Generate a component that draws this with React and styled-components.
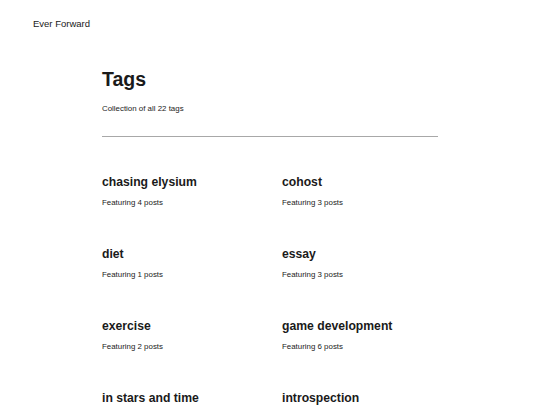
import React from "react";
import styled, { createGlobalStyle } from "styled-components";

const Global = createGlobalStyle`
  html, body { margin: 0; padding: 0; background: #ffffff; }
  body { font-family: "Liberation Sans", Arial, sans-serif; color: #1f1f1f; }
`;

const Header = styled.header`
  padding: 18px 33px 0;
`;

const SiteName = styled.a`
  display: block;
  font-size: 9.5px;
  line-height: 12px;
  color: #1a1a1a;
  text-decoration: none;
`;

const Main = styled.main`
  width: 336px;
  margin: 0 auto;
`;

const Title = styled.h1`
  margin: 37px 0 0;
  font-size: 19.5px;
  line-height: 24px;
  font-weight: 700;
  color: #1a1a1a;
`;

const Subtitle = styled.p`
  margin: 13px 0 0;
  font-size: 7.9px;
  line-height: 10px;
  color: #222;
`;

const Rule = styled.hr`
  margin: 22px 0 0;
  border: 0;
  border-top: 1.5px solid #a8a8a8;
  height: 0;
`;

const Grid = styled.div`
  display: grid;
  grid-template-columns: 180px 156px;
  row-gap: 39px;
  padding-top: 38px;
`;

const Tag = styled.div`
  display: flex;
  flex-direction: column;
  gap: 8px;
`;

const TagName = styled.a`
  font-size: 12.2px;
  line-height: 15px;
  font-weight: 700;
  color: #1a1a1a;
  text-decoration: none;
`;

const TagCount = styled.span`
  font-size: 7.9px;
  line-height: 10px;
  color: #222;
`;

const tags = [
  ["chasing elysium", 4],
  ["cohost", 3],
  ["diet", 1],
  ["essay", 3],
  ["exercise", 2],
  ["game development", 6],
  ["in stars and time", 2],
  ["introspection", 3],
];

export default function App() {
  return (
    <>
      <Global />
      <Header>
        <SiteName href="#">Ever Forward</SiteName>
      </Header>
      <Main>
        <Title>Tags</Title>
        <Subtitle>Collection of all 22 tags</Subtitle>
        <Rule />
        <Grid>
          {tags.map(([name, n]) => (
            <Tag key={name}>
              <TagName href="#">{name}</TagName>
              <TagCount>Featuring {n} posts</TagCount>
            </Tag>
          ))}
        </Grid>
      </Main>
    </>
  );
}
